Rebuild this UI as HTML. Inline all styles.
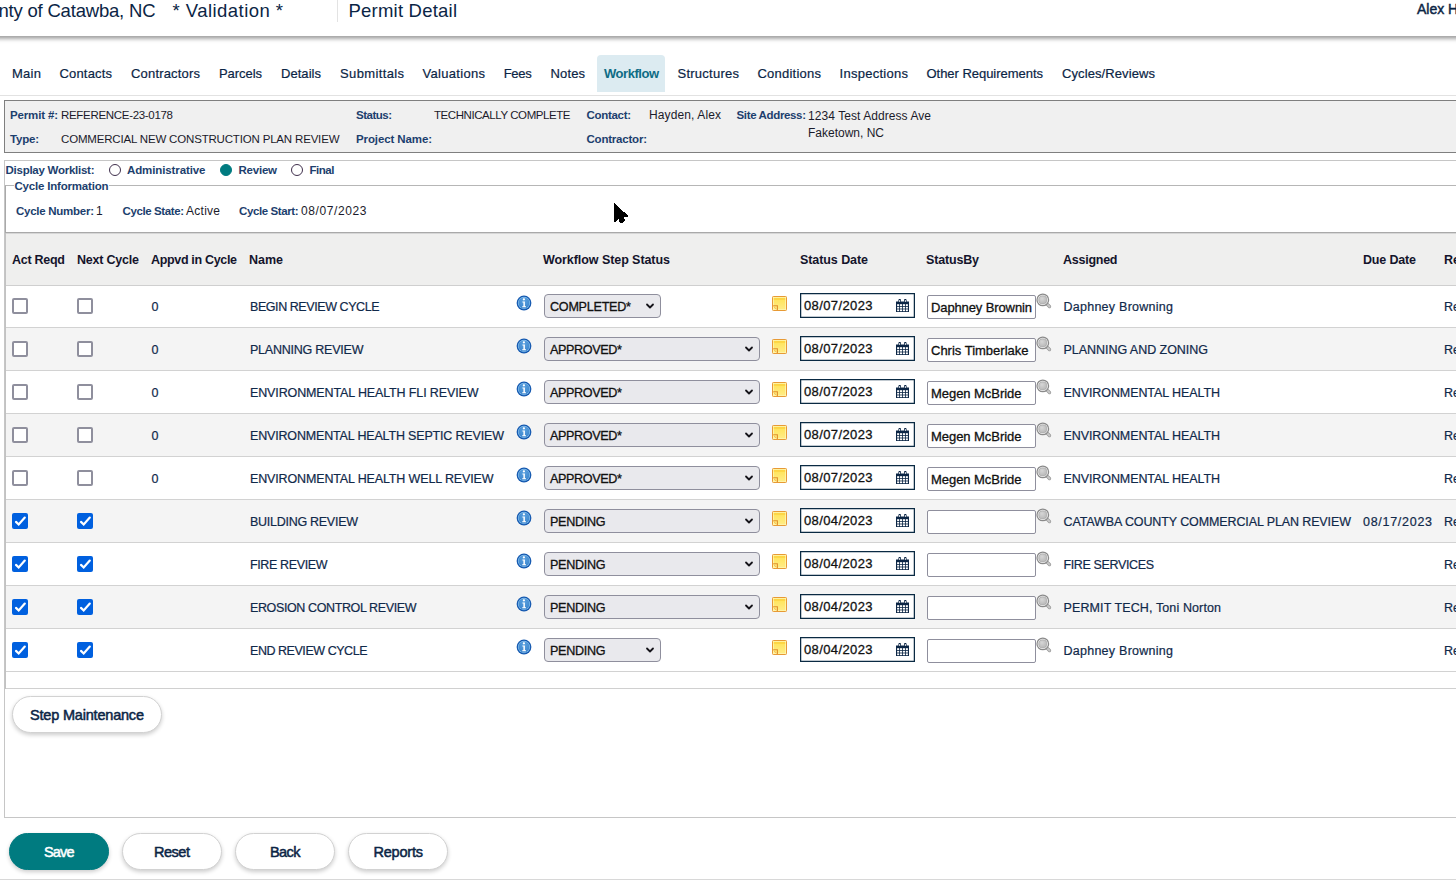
<!DOCTYPE html><html><head><meta charset="utf-8"><title>Permit Detail</title><style>
html,body{margin:0;padding:0}
body{width:1456px;height:884px;overflow:hidden;background:#fff;position:relative;font-family:"Liberation Sans",sans-serif}
.t{z-index:3;position:absolute;white-space:pre;line-height:20px;height:20px;display:block}
.abs,.row,.cb,.sel,.date,.inp,.ico,.btn,.rad{position:absolute;box-sizing:border-box}
#hdr{left:0;top:0;width:1456px;height:36px;background:#fff}
#hshadow{left:-20px;top:30px;width:1500px;height:6px;box-shadow:0 2.5px 4px rgba(0,0,0,.42)}
#hsep{left:337px;top:0;width:1px;height:22px;background:#e3e3e3}
#tabline{left:0;top:95px;width:1456px;height:1px;background:#e2e2e2}
#wtab{left:597px;top:55px;width:68px;height:37px;background:#dcebf1;border-radius:4px 4px 0 0}
#info{left:4px;top:100px;width:1470px;height:53px;background:#f0f0f0;border:1px solid #7f7f7f}
#panel{left:4px;top:160px;width:1470px;height:658px;border:1px solid #c6c6c6;background:#fff}
#fs{left:5px;top:185px;width:1470px;height:48px;border:1px solid #a9a9a9;border-top-color:#b6b6b6;border-right:none}
#tleft{left:5px;top:233px;width:1px;height:456px;background:#c2c2c2}
#legbg{left:13.5px;top:180px;width:95.5px;height:12px;background:#fff}
#thead{z-index:2;left:6px;top:233px;width:1450px;height:53px;background:#efefee;border-top:1px solid #d6d6d6;border-bottom:1px solid #cfcfcf}
.row{left:6px;width:1450px;height:43px;border-bottom:1px solid #d2d2d2}
#tend{left:6px;top:688px;width:1450px;height:1px;background:#d0d0d0}
.cb{width:16px;height:16px;border:2px solid #8f8f9d;border-radius:2px;background:#fff}
.cb.on{border:none;background:#0060df}
.cb svg{position:absolute;left:0;top:0;width:16px;height:16px}
.sel{height:24px;border:1px solid #8f8f9d;border-radius:4px;background:#e9e9ed}
.sel svg{position:absolute;right:5px;top:8.4px;width:10px;height:7px}
.date{width:115px;height:25px;border:1px solid #0a2a43;background:#fff;box-shadow:inset 0 0 0 .25px #0a2a43}
.inp{width:109px;height:24px;border:1px solid #8f8f9d;border-radius:2px;background:#fff}
.info{width:16px;height:16px}
.note{width:15px;height:15px}
.cal{width:13px;height:13.2px}
.mag{width:16px;height:16px}
.btn{height:37px;border:1px solid #d2d2d2;border-radius:19px;background:#fff;box-shadow:0 2px 4.5px rgba(0,0,0,.2)}
#save{background:#007b80;border-color:#007b80}
.rad{width:12px;height:12px;border-radius:50%;border:1px solid #40304d;background:#fff}
#botline{left:0;top:879px;width:1456px;height:1px;background:#d8d8d8}

</style></head><body>
<svg width="0" height="0" style="position:absolute">
<defs>
<radialGradient id="g-info" cx="50%" cy="30%" r="75%"><stop offset="0" stop-color="#5aa0de"/><stop offset="1" stop-color="#3b84cc"/></radialGradient>
<linearGradient id="g-note" x1="0" y1="0" x2="0" y2="1"><stop offset="0" stop-color="#ffe356"/><stop offset="1" stop-color="#ffec85"/></linearGradient>
<radialGradient id="g-lens" cx="40%" cy="35%" r="70%"><stop offset="0" stop-color="#d6d6d6"/><stop offset="1" stop-color="#b6b6b6"/></radialGradient>
<symbol id="i-info" viewBox="0 0 16 16"><circle cx="8" cy="8" r="7.4" fill="#1559b0"/><circle cx="8" cy="8" r="6.15" fill="#8ac3ee"/><circle cx="8" cy="8" r="5.5" fill="url(#g-info)"/><circle cx="7.9" cy="4.3" r="1.15" fill="#fff"/><path d="M6.4 6.5h2.5v4.8h1.1v1H6.2v-1h1.2V7.4h-1z" fill="#fff"/></symbol>
<symbol id="i-note" viewBox="0 0 15 15"><rect x=".5" y=".5" width="14" height="14" rx=".8" fill="#fff6b0" stroke="#e79a35"/><rect x="1.8" y="1.8" width="11.4" height="11.4" fill="url(#g-note)"/><rect x="1.8" y="2.2" width="11.4" height="1.5" fill="#fdd23f"/><path d="M1.2 9.7h4.2v4.2" fill="none" stroke="#e0902c" stroke-width="1.1"/><path d="M1.8 10.6l2.8 2.8" stroke="#efb24c" stroke-width=".9"/></symbol>
<symbol id="i-cal" viewBox="0 0 13 13.2"><path d="M0 2.6h13v10.6H0z" fill="#0b2545"/><path d="M2.4 1.2a1.3 1.3 0 0 1 2.6 0v2.2H2.4zM8 1.2a1.3 1.3 0 0 1 2.6 0v2.2H8z" fill="#0b2545"/><rect x="3.2" y="1" width="1" height="2" rx=".5" fill="#fff"/><rect x="8.8" y="1" width="1" height="2" rx=".5" fill="#fff"/><g fill="#fff"><rect x="1.1" y="5.2" width="2.1" height="1.8"/><rect x="4.0" y="5.2" width="2.1" height="1.8"/><rect x="6.9" y="5.2" width="2.1" height="1.8"/><rect x="9.8" y="5.2" width="2.1" height="1.8"/><rect x="1.1" y="7.8" width="2.1" height="1.8"/><rect x="4.0" y="7.8" width="2.1" height="1.8"/><rect x="6.9" y="7.8" width="2.1" height="1.8"/><rect x="9.8" y="7.8" width="2.1" height="1.8"/><rect x="1.1" y="10.4" width="2.1" height="1.8"/><rect x="4.0" y="10.4" width="2.1" height="1.8"/><rect x="6.9" y="10.4" width="2.1" height="1.8"/><rect x="9.8" y="10.4" width="2.1" height="1.8"/></g></symbol>
<symbol id="i-mag" viewBox="0 0 16 16"><path d="M10.8 10.9l2.7 2.6" stroke="#989898" stroke-width="3.3" stroke-linecap="round"/><path d="M10.8 10.9l2.7 2.6" stroke="#c9c9c9" stroke-width="1.9" stroke-linecap="round"/><circle cx="6.8" cy="6.9" r="5.8" fill="#fff" stroke="#8a8a8a" stroke-width="1.25"/><circle cx="6.8" cy="6.9" r="4.1" fill="url(#g-lens)" stroke="#a2a2a2" stroke-width=".7"/></symbol>
</defs></svg>
<div class="abs" id="tabline"></div>
<div class="abs" id="wtab"></div>
<div class="abs" id="info"></div>
<div class="abs" id="panel"></div>
<div class="abs" id="fs"></div>
<div class="abs" id="legbg"></div>
<div class="abs" id="tleft"></div>
<div class="abs" id="thead"></div>
<div class="abs" id="tend"></div>
<div class="abs" id="hshadow"></div>
<div class="abs" id="hdr"></div>
<div class="abs" id="hsep"></div>
<div class="rad" style="left:109px;top:164px"></div>
<div class="rad" style="left:219.5px;top:164px;background:#007b80;border-color:#007b80"></div>
<div class="rad" style="left:291px;top:164px"></div>
<div class="btn" style="left:12px;top:696px;width:150px;height:36.5px"></div>
<div class="btn" id="save" style="left:9px;top:833px;width:100px"></div>
<div class="btn" style="left:122px;top:833px;width:100px"></div>
<div class="btn" style="left:235px;top:833px;width:100px"></div>
<div class="btn" style="left:348px;top:833px;width:100px"></div>
<div class="abs" id="botline"></div>
<svg class="abs" style="left:610px;top:200px" width="22" height="26" viewBox="610 200 22 26" shape-rendering="crispEdges"><path d="M614 203L614 222L616 222L618.6 219.2L620 223L622.4 223L625 220.6L623.6 216.6L628 216.6L628 215.6Z" fill="#000"/></svg>

<div class="row" style="top:285px;background:#fff"></div>
<div class="cb" style="left:12px;top:298px"></div>
<div class="cb" style="left:77px;top:298px"></div>
<svg class="ico info" style="left:515.55px;top:295.05px" viewBox="0 0 16 16"><use href="#i-info"/></svg>
<div class="sel" style="left:544px;top:294px;width:117px"><svg viewBox="0 0 10 7"><path d="M2 1.5L5 4.5L8 1.5" fill="none" stroke="#15141a" stroke-width="1.8" stroke-linecap="round" stroke-linejoin="round"/></svg></div>
<svg class="ico note" style="left:772px;top:296px" viewBox="0 0 15 15"><use href="#i-note"/></svg>
<div class="date" style="left:800px;top:293px"></div>
<svg class="ico cal" style="left:896px;top:298.8px" viewBox="0 0 13 13.2"><use href="#i-cal"/></svg>
<div class="inp" style="left:927px;top:295px"></div>
<svg class="ico mag" style="left:1036px;top:292.5px" viewBox="0 0 16 16"><use href="#i-mag"/></svg>
<div class="row" style="top:328px;background:#f4f4f4"></div>
<div class="cb" style="left:12px;top:341px"></div>
<div class="cb" style="left:77px;top:341px"></div>
<svg class="ico info" style="left:515.55px;top:338.05px" viewBox="0 0 16 16"><use href="#i-info"/></svg>
<div class="sel" style="left:544px;top:337px;width:216px"><svg viewBox="0 0 10 7"><path d="M2 1.5L5 4.5L8 1.5" fill="none" stroke="#15141a" stroke-width="1.8" stroke-linecap="round" stroke-linejoin="round"/></svg></div>
<svg class="ico note" style="left:772px;top:339px" viewBox="0 0 15 15"><use href="#i-note"/></svg>
<div class="date" style="left:800px;top:336px"></div>
<svg class="ico cal" style="left:896px;top:341.8px" viewBox="0 0 13 13.2"><use href="#i-cal"/></svg>
<div class="inp" style="left:927px;top:338px"></div>
<svg class="ico mag" style="left:1036px;top:335.5px" viewBox="0 0 16 16"><use href="#i-mag"/></svg>
<div class="row" style="top:371px;background:#fff"></div>
<div class="cb" style="left:12px;top:384px"></div>
<div class="cb" style="left:77px;top:384px"></div>
<svg class="ico info" style="left:515.55px;top:381.05px" viewBox="0 0 16 16"><use href="#i-info"/></svg>
<div class="sel" style="left:544px;top:380px;width:216px"><svg viewBox="0 0 10 7"><path d="M2 1.5L5 4.5L8 1.5" fill="none" stroke="#15141a" stroke-width="1.8" stroke-linecap="round" stroke-linejoin="round"/></svg></div>
<svg class="ico note" style="left:772px;top:382px" viewBox="0 0 15 15"><use href="#i-note"/></svg>
<div class="date" style="left:800px;top:379px"></div>
<svg class="ico cal" style="left:896px;top:384.8px" viewBox="0 0 13 13.2"><use href="#i-cal"/></svg>
<div class="inp" style="left:927px;top:381px"></div>
<svg class="ico mag" style="left:1036px;top:378.5px" viewBox="0 0 16 16"><use href="#i-mag"/></svg>
<div class="row" style="top:414px;background:#f4f4f4"></div>
<div class="cb" style="left:12px;top:427px"></div>
<div class="cb" style="left:77px;top:427px"></div>
<svg class="ico info" style="left:515.55px;top:424.05px" viewBox="0 0 16 16"><use href="#i-info"/></svg>
<div class="sel" style="left:544px;top:423px;width:216px"><svg viewBox="0 0 10 7"><path d="M2 1.5L5 4.5L8 1.5" fill="none" stroke="#15141a" stroke-width="1.8" stroke-linecap="round" stroke-linejoin="round"/></svg></div>
<svg class="ico note" style="left:772px;top:425px" viewBox="0 0 15 15"><use href="#i-note"/></svg>
<div class="date" style="left:800px;top:422px"></div>
<svg class="ico cal" style="left:896px;top:427.8px" viewBox="0 0 13 13.2"><use href="#i-cal"/></svg>
<div class="inp" style="left:927px;top:424px"></div>
<svg class="ico mag" style="left:1036px;top:421.5px" viewBox="0 0 16 16"><use href="#i-mag"/></svg>
<div class="row" style="top:457px;background:#fff"></div>
<div class="cb" style="left:12px;top:470px"></div>
<div class="cb" style="left:77px;top:470px"></div>
<svg class="ico info" style="left:515.55px;top:467.05px" viewBox="0 0 16 16"><use href="#i-info"/></svg>
<div class="sel" style="left:544px;top:466px;width:216px"><svg viewBox="0 0 10 7"><path d="M2 1.5L5 4.5L8 1.5" fill="none" stroke="#15141a" stroke-width="1.8" stroke-linecap="round" stroke-linejoin="round"/></svg></div>
<svg class="ico note" style="left:772px;top:468px" viewBox="0 0 15 15"><use href="#i-note"/></svg>
<div class="date" style="left:800px;top:465px"></div>
<svg class="ico cal" style="left:896px;top:470.8px" viewBox="0 0 13 13.2"><use href="#i-cal"/></svg>
<div class="inp" style="left:927px;top:467px"></div>
<svg class="ico mag" style="left:1036px;top:464.5px" viewBox="0 0 16 16"><use href="#i-mag"/></svg>
<div class="row" style="top:500px;background:#f4f4f4"></div>
<div class="cb on" style="left:12px;top:513px"><svg viewBox="0 0 16 16"><path d="M4 8.9L6.7 11.5L12.8 4.6" fill="none" stroke="#fff" stroke-width="2.2" stroke-linecap="round" stroke-linejoin="miter"/></svg></div>
<div class="cb on" style="left:77px;top:513px"><svg viewBox="0 0 16 16"><path d="M4 8.9L6.7 11.5L12.8 4.6" fill="none" stroke="#fff" stroke-width="2.2" stroke-linecap="round" stroke-linejoin="miter"/></svg></div>
<svg class="ico info" style="left:515.55px;top:510.05px" viewBox="0 0 16 16"><use href="#i-info"/></svg>
<div class="sel" style="left:544px;top:509px;width:216px"><svg viewBox="0 0 10 7"><path d="M2 1.5L5 4.5L8 1.5" fill="none" stroke="#15141a" stroke-width="1.8" stroke-linecap="round" stroke-linejoin="round"/></svg></div>
<svg class="ico note" style="left:772px;top:511px" viewBox="0 0 15 15"><use href="#i-note"/></svg>
<div class="date" style="left:800px;top:508px"></div>
<svg class="ico cal" style="left:896px;top:513.8px" viewBox="0 0 13 13.2"><use href="#i-cal"/></svg>
<div class="inp" style="left:927px;top:510px"></div>
<svg class="ico mag" style="left:1036px;top:507.5px" viewBox="0 0 16 16"><use href="#i-mag"/></svg>
<div class="row" style="top:543px;background:#fff"></div>
<div class="cb on" style="left:12px;top:556px"><svg viewBox="0 0 16 16"><path d="M4 8.9L6.7 11.5L12.8 4.6" fill="none" stroke="#fff" stroke-width="2.2" stroke-linecap="round" stroke-linejoin="miter"/></svg></div>
<div class="cb on" style="left:77px;top:556px"><svg viewBox="0 0 16 16"><path d="M4 8.9L6.7 11.5L12.8 4.6" fill="none" stroke="#fff" stroke-width="2.2" stroke-linecap="round" stroke-linejoin="miter"/></svg></div>
<svg class="ico info" style="left:515.55px;top:553.05px" viewBox="0 0 16 16"><use href="#i-info"/></svg>
<div class="sel" style="left:544px;top:552px;width:216px"><svg viewBox="0 0 10 7"><path d="M2 1.5L5 4.5L8 1.5" fill="none" stroke="#15141a" stroke-width="1.8" stroke-linecap="round" stroke-linejoin="round"/></svg></div>
<svg class="ico note" style="left:772px;top:554px" viewBox="0 0 15 15"><use href="#i-note"/></svg>
<div class="date" style="left:800px;top:551px"></div>
<svg class="ico cal" style="left:896px;top:556.8px" viewBox="0 0 13 13.2"><use href="#i-cal"/></svg>
<div class="inp" style="left:927px;top:553px"></div>
<svg class="ico mag" style="left:1036px;top:550.5px" viewBox="0 0 16 16"><use href="#i-mag"/></svg>
<div class="row" style="top:586px;background:#f4f4f4"></div>
<div class="cb on" style="left:12px;top:599px"><svg viewBox="0 0 16 16"><path d="M4 8.9L6.7 11.5L12.8 4.6" fill="none" stroke="#fff" stroke-width="2.2" stroke-linecap="round" stroke-linejoin="miter"/></svg></div>
<div class="cb on" style="left:77px;top:599px"><svg viewBox="0 0 16 16"><path d="M4 8.9L6.7 11.5L12.8 4.6" fill="none" stroke="#fff" stroke-width="2.2" stroke-linecap="round" stroke-linejoin="miter"/></svg></div>
<svg class="ico info" style="left:515.55px;top:596.05px" viewBox="0 0 16 16"><use href="#i-info"/></svg>
<div class="sel" style="left:544px;top:595px;width:216px"><svg viewBox="0 0 10 7"><path d="M2 1.5L5 4.5L8 1.5" fill="none" stroke="#15141a" stroke-width="1.8" stroke-linecap="round" stroke-linejoin="round"/></svg></div>
<svg class="ico note" style="left:772px;top:597px" viewBox="0 0 15 15"><use href="#i-note"/></svg>
<div class="date" style="left:800px;top:594px"></div>
<svg class="ico cal" style="left:896px;top:599.8px" viewBox="0 0 13 13.2"><use href="#i-cal"/></svg>
<div class="inp" style="left:927px;top:596px"></div>
<svg class="ico mag" style="left:1036px;top:593.5px" viewBox="0 0 16 16"><use href="#i-mag"/></svg>
<div class="row" style="top:629px;background:#fff"></div>
<div class="cb on" style="left:12px;top:642px"><svg viewBox="0 0 16 16"><path d="M4 8.9L6.7 11.5L12.8 4.6" fill="none" stroke="#fff" stroke-width="2.2" stroke-linecap="round" stroke-linejoin="miter"/></svg></div>
<div class="cb on" style="left:77px;top:642px"><svg viewBox="0 0 16 16"><path d="M4 8.9L6.7 11.5L12.8 4.6" fill="none" stroke="#fff" stroke-width="2.2" stroke-linecap="round" stroke-linejoin="miter"/></svg></div>
<svg class="ico info" style="left:515.55px;top:639.05px" viewBox="0 0 16 16"><use href="#i-info"/></svg>
<div class="sel" style="left:544px;top:638px;width:117px"><svg viewBox="0 0 10 7"><path d="M2 1.5L5 4.5L8 1.5" fill="none" stroke="#15141a" stroke-width="1.8" stroke-linecap="round" stroke-linejoin="round"/></svg></div>
<svg class="ico note" style="left:772px;top:640px" viewBox="0 0 15 15"><use href="#i-note"/></svg>
<div class="date" style="left:800px;top:637px"></div>
<svg class="ico cal" style="left:896px;top:642.8px" viewBox="0 0 13 13.2"><use href="#i-cal"/></svg>
<div class="inp" style="left:927px;top:639px"></div>
<svg class="ico mag" style="left:1036px;top:636.5px" viewBox="0 0 16 16"><use href="#i-mag"/></svg>
<span class="t" style="left:-1.6px;top:0.5px;font-size:18.5px;color:#0b2545;letter-spacing:-0.194px;">nty of Catawba, NC</span>
<span class="t" style="left:172.5px;top:0.5px;font-size:18.5px;color:#0b2545;letter-spacing:0.457px;">* Validation *</span>
<span class="t" style="left:348.5px;top:0.5px;font-size:18.5px;color:#0b2545;letter-spacing:0.217px;">Permit Detail</span>
<span class="t" style="left:1417px;top:-0.6999999999999993px;font-size:14px;color:#0b2545;letter-spacing:0.000px;-webkit-text-stroke:0.45px #0b2545;">Alex Hayden</span>
<span class="t" style="left:12px;top:63.5px;font-size:13px;color:#0b2545;letter-spacing:0.271px;-webkit-text-stroke:0.2px #0b2545;">Main</span>
<span class="t" style="left:59.5px;top:63.5px;font-size:13px;color:#0b2545;letter-spacing:0.170px;-webkit-text-stroke:0.2px #0b2545;">Contacts</span>
<span class="t" style="left:131px;top:63.5px;font-size:13px;color:#0b2545;letter-spacing:0.180px;-webkit-text-stroke:0.2px #0b2545;">Contractors</span>
<span class="t" style="left:219px;top:63.5px;font-size:13px;color:#0b2545;letter-spacing:-0.060px;-webkit-text-stroke:0.2px #0b2545;">Parcels</span>
<span class="t" style="left:281px;top:63.5px;font-size:13px;color:#0b2545;letter-spacing:0.042px;-webkit-text-stroke:0.2px #0b2545;">Details</span>
<span class="t" style="left:340px;top:63.5px;font-size:13px;color:#0b2545;letter-spacing:0.366px;-webkit-text-stroke:0.2px #0b2545;">Submittals</span>
<span class="t" style="left:422.5px;top:63.5px;font-size:13px;color:#0b2545;letter-spacing:0.306px;-webkit-text-stroke:0.2px #0b2545;">Valuations</span>
<span class="t" style="left:503.7px;top:63.5px;font-size:13px;color:#0b2545;letter-spacing:-0.302px;-webkit-text-stroke:0.2px #0b2545;">Fees</span>
<span class="t" style="left:550.5px;top:63.5px;font-size:13px;color:#0b2545;letter-spacing:0.133px;-webkit-text-stroke:0.2px #0b2545;">Notes</span>
<span class="t" style="left:604px;top:63.5px;font-size:13px;color:#0e6c85;letter-spacing:-0.467px;font-weight:700;">Workflow</span>
<span class="t" style="left:677.5px;top:63.5px;font-size:13px;color:#0b2545;letter-spacing:0.250px;-webkit-text-stroke:0.2px #0b2545;">Structures</span>
<span class="t" style="left:757.5px;top:63.5px;font-size:13px;color:#0b2545;letter-spacing:0.229px;-webkit-text-stroke:0.2px #0b2545;">Conditions</span>
<span class="t" style="left:839.5px;top:63.5px;font-size:13px;color:#0b2545;letter-spacing:0.273px;-webkit-text-stroke:0.2px #0b2545;">Inspections</span>
<span class="t" style="left:926.5px;top:63.5px;font-size:13px;color:#0b2545;letter-spacing:-0.033px;-webkit-text-stroke:0.2px #0b2545;">Other Requirements</span>
<span class="t" style="left:1062px;top:63.5px;font-size:13px;color:#0b2545;letter-spacing:0.096px;-webkit-text-stroke:0.2px #0b2545;">Cycles/Reviews</span>
<span class="t" style="left:10px;top:104.5px;font-size:11.5px;color:#1d3f6e;letter-spacing:-0.152px;font-weight:700;">Permit #:</span>
<span class="t" style="left:61px;top:104.5px;font-size:11.5px;color:#1b1b2b;letter-spacing:-0.311px;">REFERENCE-23-0178</span>
<span class="t" style="left:10px;top:128.5px;font-size:11.5px;color:#1d3f6e;letter-spacing:-0.207px;font-weight:700;">Type:</span>
<span class="t" style="left:61px;top:128.5px;font-size:11.5px;color:#1b1b2b;letter-spacing:-0.176px;">COMMERCIAL NEW CONSTRUCTION PLAN REVIEW</span>
<span class="t" style="left:356px;top:104.5px;font-size:11.5px;color:#1d3f6e;letter-spacing:-0.497px;font-weight:700;">Status:</span>
<span class="t" style="left:434px;top:104.5px;font-size:11.5px;color:#1b1b2b;letter-spacing:-0.428px;">TECHNICALLY COMPLETE</span>
<span class="t" style="left:356px;top:128.5px;font-size:11.5px;color:#1d3f6e;letter-spacing:-0.112px;font-weight:700;">Project Name:</span>
<span class="t" style="left:586.5px;top:104.5px;font-size:11.5px;color:#1d3f6e;letter-spacing:-0.306px;font-weight:700;">Contact:</span>
<span class="t" style="left:649px;top:104.5px;font-size:12px;color:#1b1b2b;letter-spacing:0.116px;">Hayden, Alex</span>
<span class="t" style="left:586.5px;top:128.5px;font-size:11.5px;color:#1d3f6e;letter-spacing:-0.212px;font-weight:700;">Contractor:</span>
<span class="t" style="left:736.5px;top:104.5px;font-size:11.5px;color:#1d3f6e;letter-spacing:-0.352px;font-weight:700;">Site Address:</span>
<span class="t" style="left:808px;top:105.5px;font-size:12px;color:#1b1b2b;letter-spacing:0.067px;">1234 Test Address Ave</span>
<span class="t" style="left:808px;top:122.5px;font-size:12px;color:#1b1b2b;letter-spacing:-0.003px;">Faketown, NC</span>
<span class="t" style="left:5.5px;top:160px;font-size:11.5px;color:#1d3f6e;letter-spacing:-0.256px;font-weight:700;">Display Worklist:</span>
<span class="t" style="left:127px;top:160px;font-size:11.5px;color:#1d3f6e;letter-spacing:-0.107px;font-weight:700;">Administrative</span>
<span class="t" style="left:238.5px;top:160px;font-size:11.5px;color:#1d3f6e;letter-spacing:-0.228px;font-weight:700;">Review</span>
<span class="t" style="left:309.5px;top:160px;font-size:11.5px;color:#1d3f6e;letter-spacing:-0.461px;font-weight:700;">Final</span>
<span class="t" style="left:14.5px;top:175.5px;font-size:11.5px;color:#1d3f6e;letter-spacing:-0.196px;font-weight:700;">Cycle Information</span>
<span class="t" style="left:16px;top:200.5px;font-size:11.5px;color:#1d3f6e;letter-spacing:-0.264px;font-weight:700;">Cycle Number:</span>
<span class="t" style="left:96px;top:200.5px;font-size:12px;color:#1b1b2b;letter-spacing:0.000px;">1</span>
<span class="t" style="left:122.5px;top:200.5px;font-size:11.5px;color:#1d3f6e;letter-spacing:-0.395px;font-weight:700;">Cycle State:</span>
<span class="t" style="left:186px;top:200.5px;font-size:12px;color:#1b1b2b;letter-spacing:0.263px;">Active</span>
<span class="t" style="left:239px;top:200.5px;font-size:11.5px;color:#1d3f6e;letter-spacing:-0.402px;font-weight:700;">Cycle Start:</span>
<span class="t" style="left:301px;top:200.5px;font-size:12px;color:#1b1b2b;letter-spacing:0.604px;">08/07/2023</span>
<span class="t" style="left:12px;top:249.5px;font-size:12.5px;color:#14142b;letter-spacing:-0.268px;font-weight:700;">Act Reqd</span>
<span class="t" style="left:77px;top:249.5px;font-size:12.5px;color:#14142b;letter-spacing:-0.215px;font-weight:700;">Next Cycle</span>
<span class="t" style="left:151px;top:249.5px;font-size:12.5px;color:#14142b;letter-spacing:-0.331px;font-weight:700;">Appvd in Cycle</span>
<span class="t" style="left:249px;top:249.5px;font-size:12.5px;color:#14142b;letter-spacing:-0.016px;font-weight:700;">Name</span>
<span class="t" style="left:543px;top:249.5px;font-size:12.5px;color:#14142b;letter-spacing:-0.067px;font-weight:700;">Workflow Step Status</span>
<span class="t" style="left:800px;top:249.5px;font-size:12.5px;color:#14142b;letter-spacing:-0.078px;font-weight:700;">Status Date</span>
<span class="t" style="left:926px;top:249.5px;font-size:12.5px;color:#14142b;letter-spacing:-0.170px;font-weight:700;">StatusBy</span>
<span class="t" style="left:1063px;top:249.5px;font-size:12.5px;color:#14142b;letter-spacing:-0.252px;font-weight:700;">Assigned</span>
<span class="t" style="left:1363px;top:249.5px;font-size:12.5px;color:#14142b;letter-spacing:-0.170px;font-weight:700;">Due Date</span>
<span class="t" style="left:1444px;top:249.5px;font-size:12.5px;color:#14142b;letter-spacing:0.000px;font-weight:700;">Re</span>
<span class="t" style="left:151.5px;top:296.5px;font-size:12.5px;color:#10294a;letter-spacing:0.000px;-webkit-text-stroke:0.2px #10294a;">0</span>
<span class="t" style="left:250px;top:296.5px;font-size:12.5px;color:#10294a;letter-spacing:-0.432px;-webkit-text-stroke:0.2px #10294a;">BEGIN REVIEW CYCLE</span>
<span class="t" style="left:550px;top:296.5px;font-size:12.6px;color:#111;letter-spacing:-0.253px;-webkit-text-stroke:0.3px #111;">COMPLETED*</span>
<span class="t" style="left:804px;top:295.5px;font-size:13px;color:#111;letter-spacing:0.380px;-webkit-text-stroke:0.3px #111;">08/07/2023</span>
<span class="t" style="left:931px;top:297.5px;font-size:13px;color:#111;letter-spacing:-0.116px;-webkit-text-stroke:0.3px #111;">Daphney Brownin</span>
<span class="t" style="left:1063.5px;top:296.5px;font-size:12.5px;color:#10294a;letter-spacing:0.258px;-webkit-text-stroke:0.2px #10294a;">Daphney Browning</span>
<span class="t" style="left:1444px;top:296.5px;font-size:12.5px;color:#10294a;letter-spacing:0.000px;-webkit-text-stroke:0.2px #10294a;">Re</span>
<span class="t" style="left:151.5px;top:339.5px;font-size:12.5px;color:#10294a;letter-spacing:0.000px;-webkit-text-stroke:0.2px #10294a;">0</span>
<span class="t" style="left:250px;top:339.5px;font-size:12.5px;color:#10294a;letter-spacing:-0.228px;-webkit-text-stroke:0.2px #10294a;">PLANNING REVIEW</span>
<span class="t" style="left:550px;top:339.5px;font-size:12.6px;color:#111;letter-spacing:-0.361px;-webkit-text-stroke:0.3px #111;">APPROVED*</span>
<span class="t" style="left:804px;top:338.5px;font-size:13px;color:#111;letter-spacing:0.380px;-webkit-text-stroke:0.3px #111;">08/07/2023</span>
<span class="t" style="left:931px;top:340.5px;font-size:13px;color:#111;letter-spacing:-0.002px;-webkit-text-stroke:0.3px #111;">Chris Timberlake</span>
<span class="t" style="left:1063.5px;top:339.5px;font-size:12.5px;color:#10294a;letter-spacing:-0.037px;-webkit-text-stroke:0.2px #10294a;">PLANNING AND ZONING</span>
<span class="t" style="left:1444px;top:339.5px;font-size:12.5px;color:#10294a;letter-spacing:0.000px;-webkit-text-stroke:0.2px #10294a;">Re</span>
<span class="t" style="left:151.5px;top:382.5px;font-size:12.5px;color:#10294a;letter-spacing:0.000px;-webkit-text-stroke:0.2px #10294a;">0</span>
<span class="t" style="left:250px;top:382.5px;font-size:12.5px;color:#10294a;letter-spacing:-0.132px;-webkit-text-stroke:0.2px #10294a;">ENVIRONMENTAL HEALTH FLI REVIEW</span>
<span class="t" style="left:550px;top:382.5px;font-size:12.6px;color:#111;letter-spacing:-0.361px;-webkit-text-stroke:0.3px #111;">APPROVED*</span>
<span class="t" style="left:804px;top:381.5px;font-size:13px;color:#111;letter-spacing:0.380px;-webkit-text-stroke:0.3px #111;">08/07/2023</span>
<span class="t" style="left:931px;top:383.5px;font-size:13px;color:#111;letter-spacing:-0.046px;-webkit-text-stroke:0.3px #111;">Megen McBride</span>
<span class="t" style="left:1063.5px;top:382.5px;font-size:12.5px;color:#10294a;letter-spacing:-0.086px;-webkit-text-stroke:0.2px #10294a;">ENVIRONMENTAL HEALTH</span>
<span class="t" style="left:1444px;top:382.5px;font-size:12.5px;color:#10294a;letter-spacing:0.000px;-webkit-text-stroke:0.2px #10294a;">Re</span>
<span class="t" style="left:151.5px;top:425.5px;font-size:12.5px;color:#10294a;letter-spacing:0.000px;-webkit-text-stroke:0.2px #10294a;">0</span>
<span class="t" style="left:250px;top:425.5px;font-size:12.5px;color:#10294a;letter-spacing:-0.168px;-webkit-text-stroke:0.2px #10294a;">ENVIRONMENTAL HEALTH SEPTIC REVIEW</span>
<span class="t" style="left:550px;top:425.5px;font-size:12.6px;color:#111;letter-spacing:-0.361px;-webkit-text-stroke:0.3px #111;">APPROVED*</span>
<span class="t" style="left:804px;top:424.5px;font-size:13px;color:#111;letter-spacing:0.380px;-webkit-text-stroke:0.3px #111;">08/07/2023</span>
<span class="t" style="left:931px;top:426.5px;font-size:13px;color:#111;letter-spacing:-0.046px;-webkit-text-stroke:0.3px #111;">Megen McBride</span>
<span class="t" style="left:1063.5px;top:425.5px;font-size:12.5px;color:#10294a;letter-spacing:-0.086px;-webkit-text-stroke:0.2px #10294a;">ENVIRONMENTAL HEALTH</span>
<span class="t" style="left:1444px;top:425.5px;font-size:12.5px;color:#10294a;letter-spacing:0.000px;-webkit-text-stroke:0.2px #10294a;">Re</span>
<span class="t" style="left:151.5px;top:468.5px;font-size:12.5px;color:#10294a;letter-spacing:0.000px;-webkit-text-stroke:0.2px #10294a;">0</span>
<span class="t" style="left:250px;top:468.5px;font-size:12.5px;color:#10294a;letter-spacing:-0.144px;-webkit-text-stroke:0.2px #10294a;">ENVIRONMENTAL HEALTH WELL REVIEW</span>
<span class="t" style="left:550px;top:468.5px;font-size:12.6px;color:#111;letter-spacing:-0.361px;-webkit-text-stroke:0.3px #111;">APPROVED*</span>
<span class="t" style="left:804px;top:467.5px;font-size:13px;color:#111;letter-spacing:0.380px;-webkit-text-stroke:0.3px #111;">08/07/2023</span>
<span class="t" style="left:931px;top:469.5px;font-size:13px;color:#111;letter-spacing:-0.046px;-webkit-text-stroke:0.3px #111;">Megen McBride</span>
<span class="t" style="left:1063.5px;top:468.5px;font-size:12.5px;color:#10294a;letter-spacing:-0.086px;-webkit-text-stroke:0.2px #10294a;">ENVIRONMENTAL HEALTH</span>
<span class="t" style="left:1444px;top:468.5px;font-size:12.5px;color:#10294a;letter-spacing:0.000px;-webkit-text-stroke:0.2px #10294a;">Re</span>
<span class="t" style="left:250px;top:511.5px;font-size:12.5px;color:#10294a;letter-spacing:-0.273px;-webkit-text-stroke:0.2px #10294a;">BUILDING REVIEW</span>
<span class="t" style="left:550px;top:511.5px;font-size:12.6px;color:#111;letter-spacing:-0.315px;-webkit-text-stroke:0.3px #111;">PENDING</span>
<span class="t" style="left:804px;top:510.5px;font-size:13px;color:#111;letter-spacing:0.380px;-webkit-text-stroke:0.3px #111;">08/04/2023</span>
<span class="t" style="left:1063.5px;top:511.5px;font-size:12.5px;color:#10294a;letter-spacing:-0.111px;-webkit-text-stroke:0.2px #10294a;">CATAWBA COUNTY COMMERCIAL PLAN REVIEW</span>
<span class="t" style="left:1363px;top:511.5px;font-size:12.5px;color:#10294a;letter-spacing:0.715px;-webkit-text-stroke:0.2px #10294a;">08/17/2023</span>
<span class="t" style="left:1444px;top:511.5px;font-size:12.5px;color:#10294a;letter-spacing:0.000px;-webkit-text-stroke:0.2px #10294a;">Re</span>
<span class="t" style="left:250px;top:554.5px;font-size:12.5px;color:#10294a;letter-spacing:-0.377px;-webkit-text-stroke:0.2px #10294a;">FIRE REVIEW</span>
<span class="t" style="left:550px;top:554.5px;font-size:12.6px;color:#111;letter-spacing:-0.315px;-webkit-text-stroke:0.3px #111;">PENDING</span>
<span class="t" style="left:804px;top:553.5px;font-size:13px;color:#111;letter-spacing:0.380px;-webkit-text-stroke:0.3px #111;">08/04/2023</span>
<span class="t" style="left:1063.5px;top:554.5px;font-size:12.5px;color:#10294a;letter-spacing:-0.370px;-webkit-text-stroke:0.2px #10294a;">FIRE SERVICES</span>
<span class="t" style="left:1444px;top:554.5px;font-size:12.5px;color:#10294a;letter-spacing:0.000px;-webkit-text-stroke:0.2px #10294a;">Re</span>
<span class="t" style="left:250px;top:597.5px;font-size:12.5px;color:#10294a;letter-spacing:-0.384px;-webkit-text-stroke:0.2px #10294a;">EROSION CONTROL REVIEW</span>
<span class="t" style="left:550px;top:597.5px;font-size:12.6px;color:#111;letter-spacing:-0.315px;-webkit-text-stroke:0.3px #111;">PENDING</span>
<span class="t" style="left:804px;top:596.5px;font-size:13px;color:#111;letter-spacing:0.380px;-webkit-text-stroke:0.3px #111;">08/04/2023</span>
<span class="t" style="left:1063.5px;top:597.5px;font-size:12.5px;color:#10294a;letter-spacing:0.112px;-webkit-text-stroke:0.2px #10294a;">PERMIT TECH, Toni Norton</span>
<span class="t" style="left:1444px;top:597.5px;font-size:12.5px;color:#10294a;letter-spacing:0.000px;-webkit-text-stroke:0.2px #10294a;">Re</span>
<span class="t" style="left:250px;top:640.5px;font-size:12.5px;color:#10294a;letter-spacing:-0.456px;-webkit-text-stroke:0.2px #10294a;">END REVIEW CYCLE</span>
<span class="t" style="left:550px;top:640.5px;font-size:12.6px;color:#111;letter-spacing:-0.315px;-webkit-text-stroke:0.3px #111;">PENDING</span>
<span class="t" style="left:804px;top:639.5px;font-size:13px;color:#111;letter-spacing:0.380px;-webkit-text-stroke:0.3px #111;">08/04/2023</span>
<span class="t" style="left:1063.5px;top:640.5px;font-size:12.5px;color:#10294a;letter-spacing:0.258px;-webkit-text-stroke:0.2px #10294a;">Daphney Browning</span>
<span class="t" style="left:1444px;top:640.5px;font-size:12.5px;color:#10294a;letter-spacing:0.000px;-webkit-text-stroke:0.2px #10294a;">Re</span>
<span class="t" style="left:30px;top:704.8px;font-size:14.5px;color:#0b2545;letter-spacing:-0.193px;-webkit-text-stroke:0.5px #0b2545;">Step Maintenance</span>
<span class="t" style="left:44px;top:842px;font-size:14.5px;color:#fff;letter-spacing:-0.854px;-webkit-text-stroke:0.5px #fff;">Save</span>
<span class="t" style="left:154px;top:842px;font-size:14.5px;color:#0b2545;letter-spacing:-0.473px;-webkit-text-stroke:0.5px #0b2545;">Reset</span>
<span class="t" style="left:270px;top:842px;font-size:14.5px;color:#0b2545;letter-spacing:-0.583px;-webkit-text-stroke:0.5px #0b2545;">Back</span>
<span class="t" style="left:373.5px;top:842px;font-size:14.5px;color:#0b2545;letter-spacing:-0.214px;-webkit-text-stroke:0.5px #0b2545;">Reports</span>
</body></html>
